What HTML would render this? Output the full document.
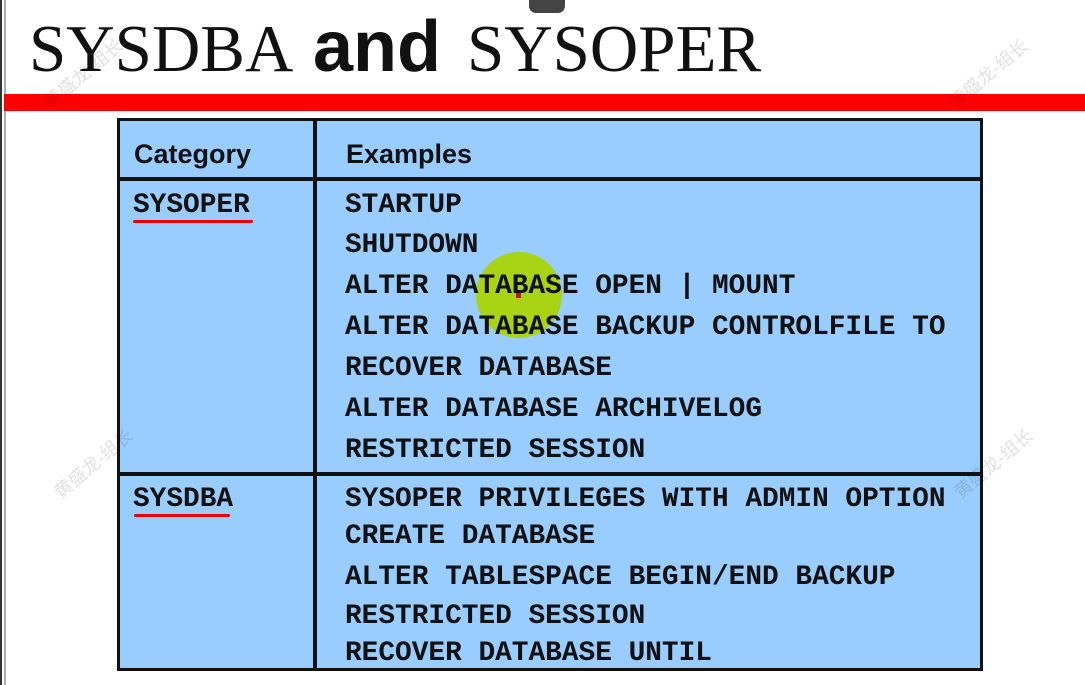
<!DOCTYPE html>
<html><head><meta charset="utf-8"><style>
body{margin:0;width:1085px;height:685px;background:#fff;position:relative;overflow:hidden}
.a{position:absolute}
.t{position:absolute;white-space:nowrap;color:#111}
.s{font-family:"Liberation Serif",serif;font-size:67px;line-height:67px}
.m{position:absolute;font-family:"Liberation Mono",monospace;font-weight:bold;font-size:27.8px;line-height:40px;color:#111;white-space:pre}
.h{position:absolute;font-family:"Liberation Sans",sans-serif;font-weight:bold;font-size:27px;line-height:40px;color:#111}
.w{position:absolute;font-family:"Liberation Sans","Noto Sans CJK SC",sans-serif;font-size:18px;color:rgba(0,0,0,0.12);transform:rotate(-40deg);white-space:nowrap}
</style></head><body>
<div class="a" style="left:0;top:0;width:2px;height:685px;background:#333"></div>
<div class="a" style="left:4px;top:0;width:2px;height:685px;background:#aaa"></div>
<div class="a" style="left:529px;top:0;width:36px;height:13px;background:#444;border-radius:0 0 7px 7px"></div>
<div class="t s" style="left:29px;top:16px">SYSDBA</div>
<div class="t" style="left:313px;top:11px;font-family:'Liberation Sans',sans-serif;font-weight:bold;font-size:72px;line-height:72px">and</div>
<div class="t s" style="left:467px;top:16px">SYSOPER</div>
<div class="a" style="left:4px;top:94px;width:1081px;height:17px;background:#f00"></div>
<div class="a" style="left:117px;top:118px;width:860px;height:547px;background:#99ccff;border:3.5px solid #111"></div>
<div class="a" style="left:313px;top:118px;width:3.5px;height:553px;background:#111"></div>
<div class="a" style="left:117px;top:177px;width:866px;height:4px;background:#111"></div>
<div class="a" style="left:117px;top:472px;width:866px;height:3.5px;background:#111"></div>
<div class="a" style="left:476px;top:252px;width:86px;height:86px;border-radius:50%;background:#a8d414"></div>
<div class="a" style="left:516px;top:293px;width:5px;height:5px;background:#e00"></div>
<div class="h" style="left:134px;top:134px">Category</div>
<div class="h" style="left:346px;top:134px">Examples</div>
<div class="m" style="left:133px;top:186px">SYSOPER</div>
<div class="a" style="left:133px;top:220px;width:120px;height:3px;background:#e00;border-radius:2px"></div>
<div class="m" style="left:133px;top:480px">SYSDBA</div>
<div class="a" style="left:134px;top:514px;width:96px;height:3px;background:#e00;border-radius:2px"></div>
<div class="m" style="left:345px;top:186px">STARTUP</div>
<div class="m" style="left:345px;top:226px">SHUTDOWN</div>
<div class="m" style="left:345px;top:267px">ALTER DATABASE OPEN | MOUNT</div>
<div class="m" style="left:345px;top:308px">ALTER DATABASE BACKUP CONTROLFILE TO</div>
<div class="m" style="left:345px;top:349px">RECOVER DATABASE</div>
<div class="m" style="left:345px;top:390px">ALTER DATABASE ARCHIVELOG</div>
<div class="m" style="left:345px;top:431px">RESTRICTED SESSION</div>
<div class="m" style="left:345px;top:480px">SYSOPER PRIVILEGES WITH ADMIN OPTION</div>
<div class="m" style="left:345px;top:517px">CREATE DATABASE</div>
<div class="m" style="left:345px;top:558px">ALTER TABLESPACE BEGIN/END BACKUP</div>
<div class="m" style="left:345px;top:597px">RESTRICTED SESSION</div>
<div class="m" style="left:345px;top:634px">RECOVER DATABASE UNTIL</div>
<div class="w" style="left:35px;top:60px">黄盛龙-组长</div>
<div class="w" style="left:940px;top:60px">黄盛龙-组长</div>
<div class="w" style="left:45px;top:450px">黄盛龙-组长</div>
<div class="w" style="left:945px;top:450px">黄盛龙-组长</div>
</body></html>
